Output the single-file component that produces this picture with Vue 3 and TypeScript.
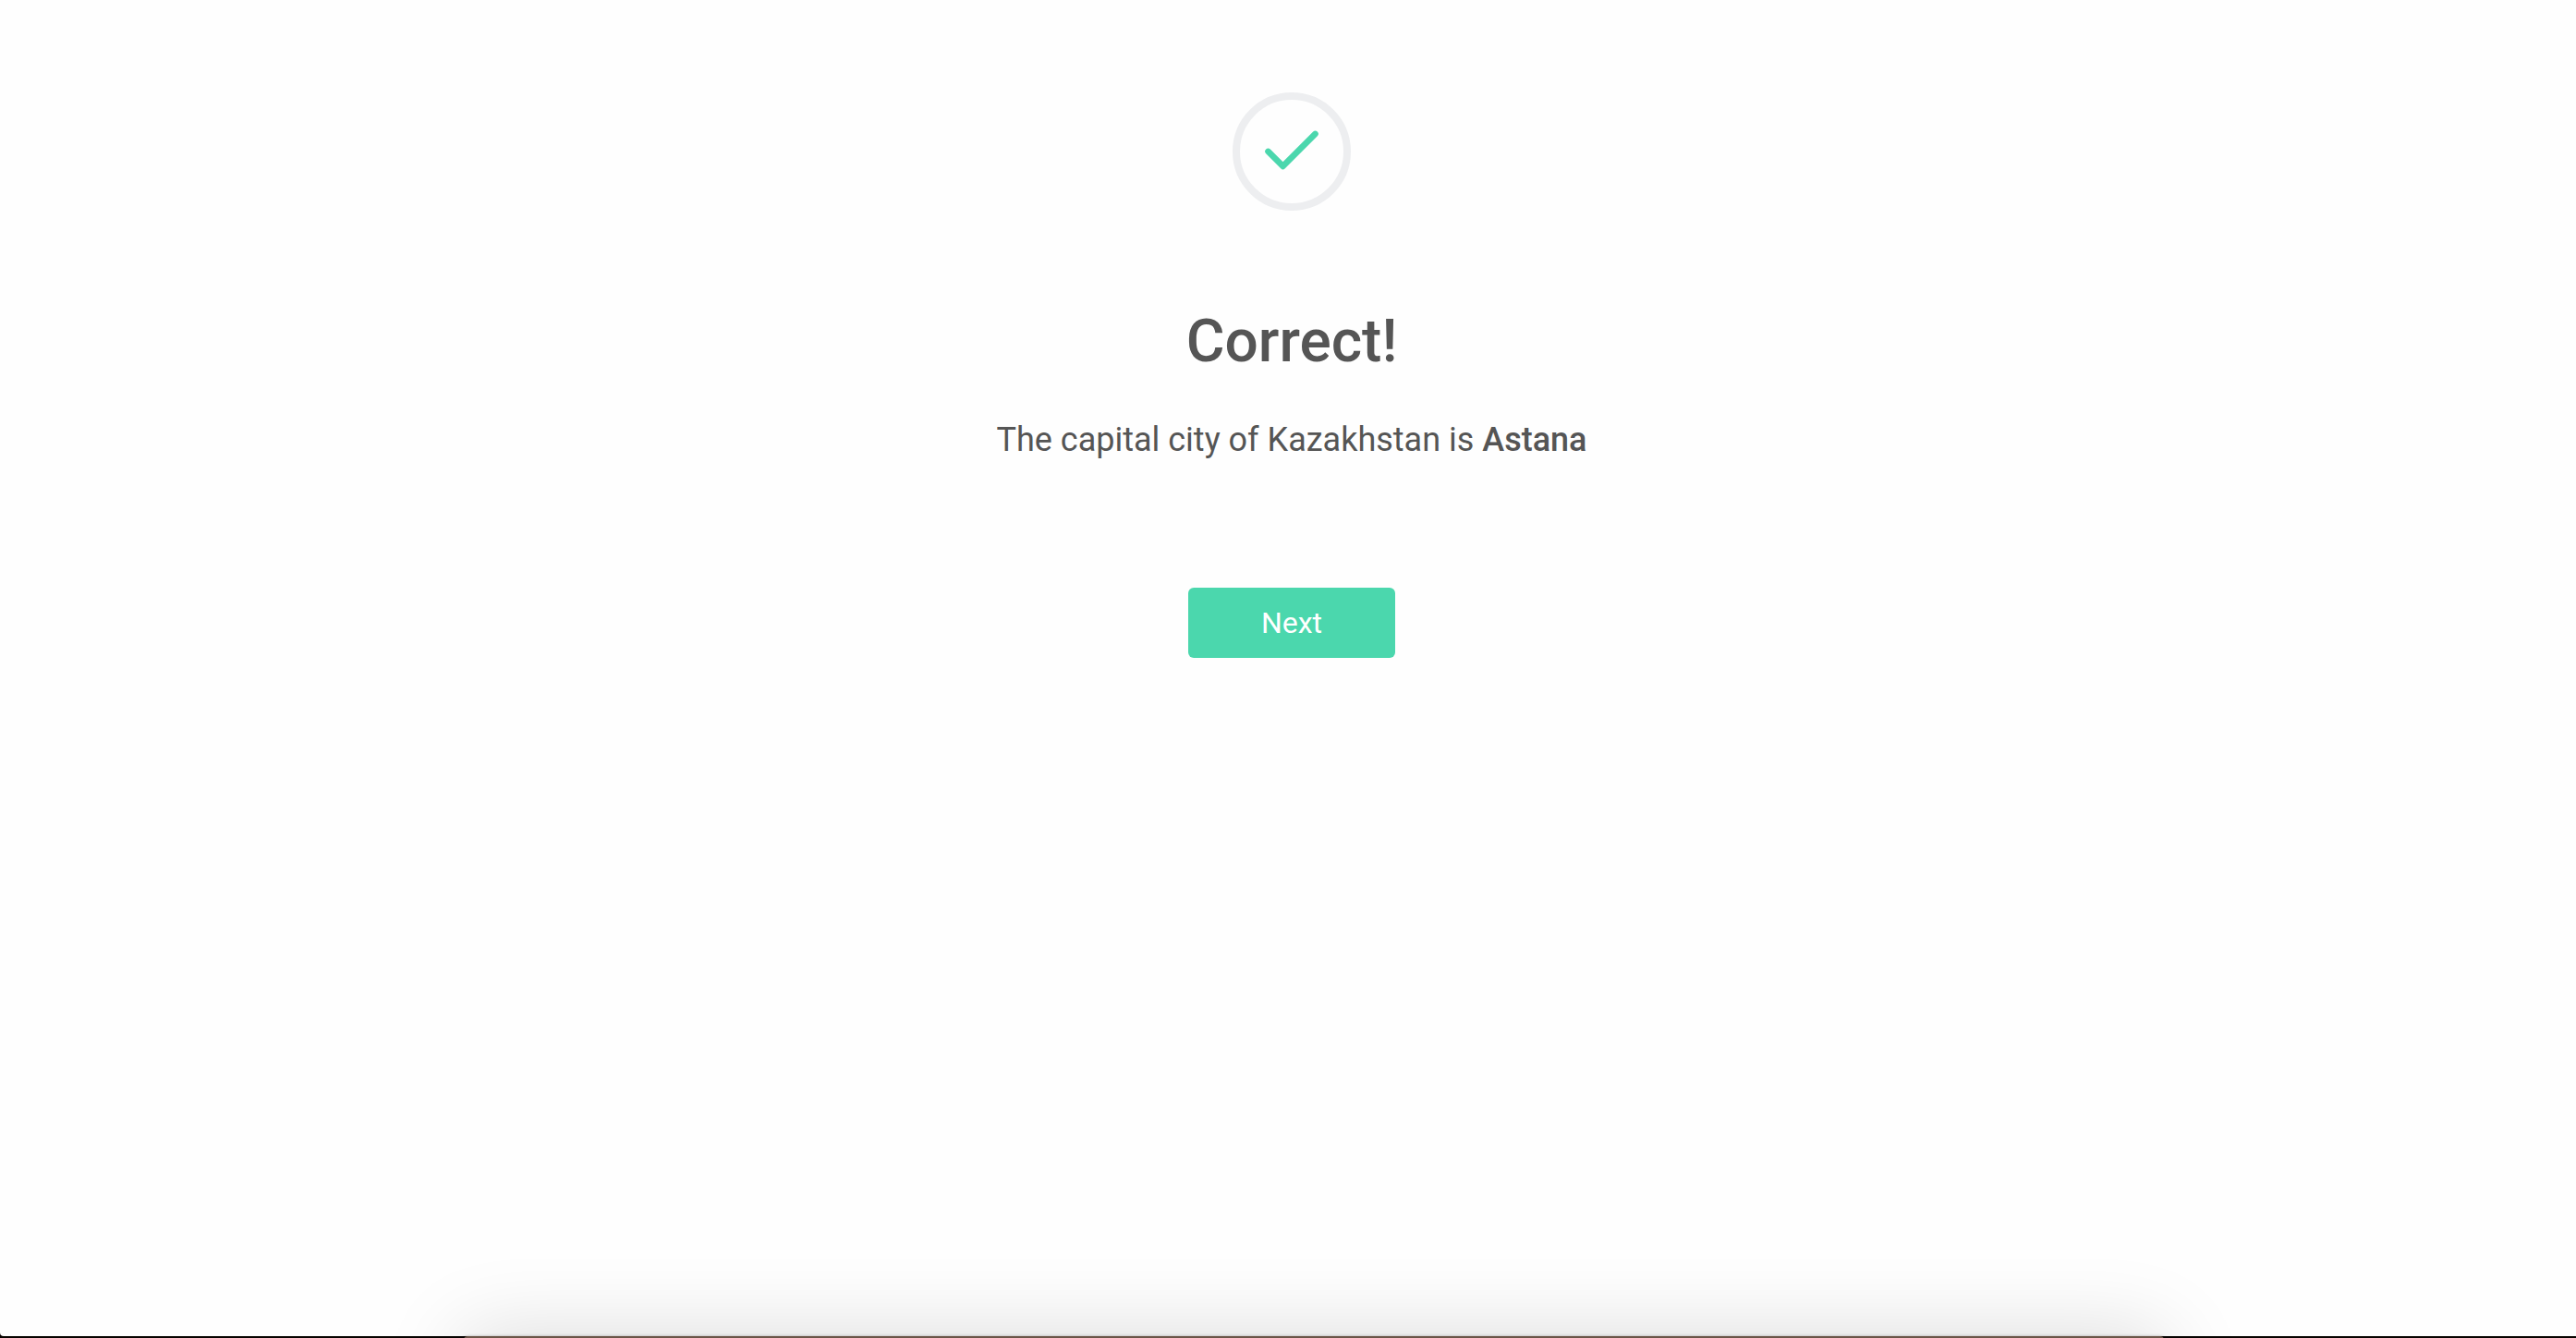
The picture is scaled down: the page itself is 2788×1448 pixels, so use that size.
<script setup lang="ts">
const country: string = 'Kazakhstan'
const capital: string = 'Astana'
</script>

<template>
  <div class="page">
    <main class="result">
      <div class="badge">
        <svg viewBox="0 0 128 128" width="128" height="128" aria-hidden="true">
          <circle cx="64" cy="64" r="60" fill="none" stroke="#edeef0" stroke-width="8" />
          <path d="M38.5 63.9 54.5 79.9 89.5 44.9" fill="none" stroke="#4bd7ad" stroke-width="6.6" stroke-linecap="round" stroke-linejoin="round" />
        </svg>
      </div>
      <h1>Correct!</h1>
      <p>The capital city of {{ country }} is <strong>{{ capital }}</strong></p>
      <button type="button">Next</button>
    </main>
    <footer class="edge"><div class="dock"></div></footer>
  </div>
</template>

<style>
body {
  margin: 0;
  background: #fefefe;
}
</style>

<style scoped>
.page {
  display: flex;
  flex-direction: column;
  min-height: 100vh;
  overflow: hidden;
  background: #080400;
  font-family: Roboto, "Liberation Sans", sans-serif;
  color: #555;
}
.result {
  flex: 1;
  display: flex;
  flex-direction: column;
  align-items: center;
  padding: 100px 0 0 8px;
  border-bottom-left-radius: 4px;
  background: #fefefe;
}
.badge {
  height: 128px;
}
h1 {
  margin: 102px 0 0;
  font-size: 64px;
  line-height: 80px;
  font-weight: 500;
}
p {
  margin: 42px 0 0;
  font-size: 36px;
  line-height: 48px;
}
strong {
  font-weight: 500;
}
button {
  width: 224px;
  height: 76px;
  margin-top: 136px;
  padding: 0;
  border: 0;
  border-radius: 6px;
  background: #4bd7ad;
  color: #fff;
  font-family: inherit;
  font-size: 32px;
  line-height: 40px;
}
.edge {
  height: 2px;
  padding: 0 16% 0 18%;
}
/* Taller than its row: only the top edge and its shadow show. */
.dock {
  height: 240px;
  border-radius: 4px;
  background: #6b5648;
  box-shadow: 0 0 3px rgba(0, 0, 0, 0.3), 0 0 90px rgba(0, 0, 0, 0.15);
}
</style>
